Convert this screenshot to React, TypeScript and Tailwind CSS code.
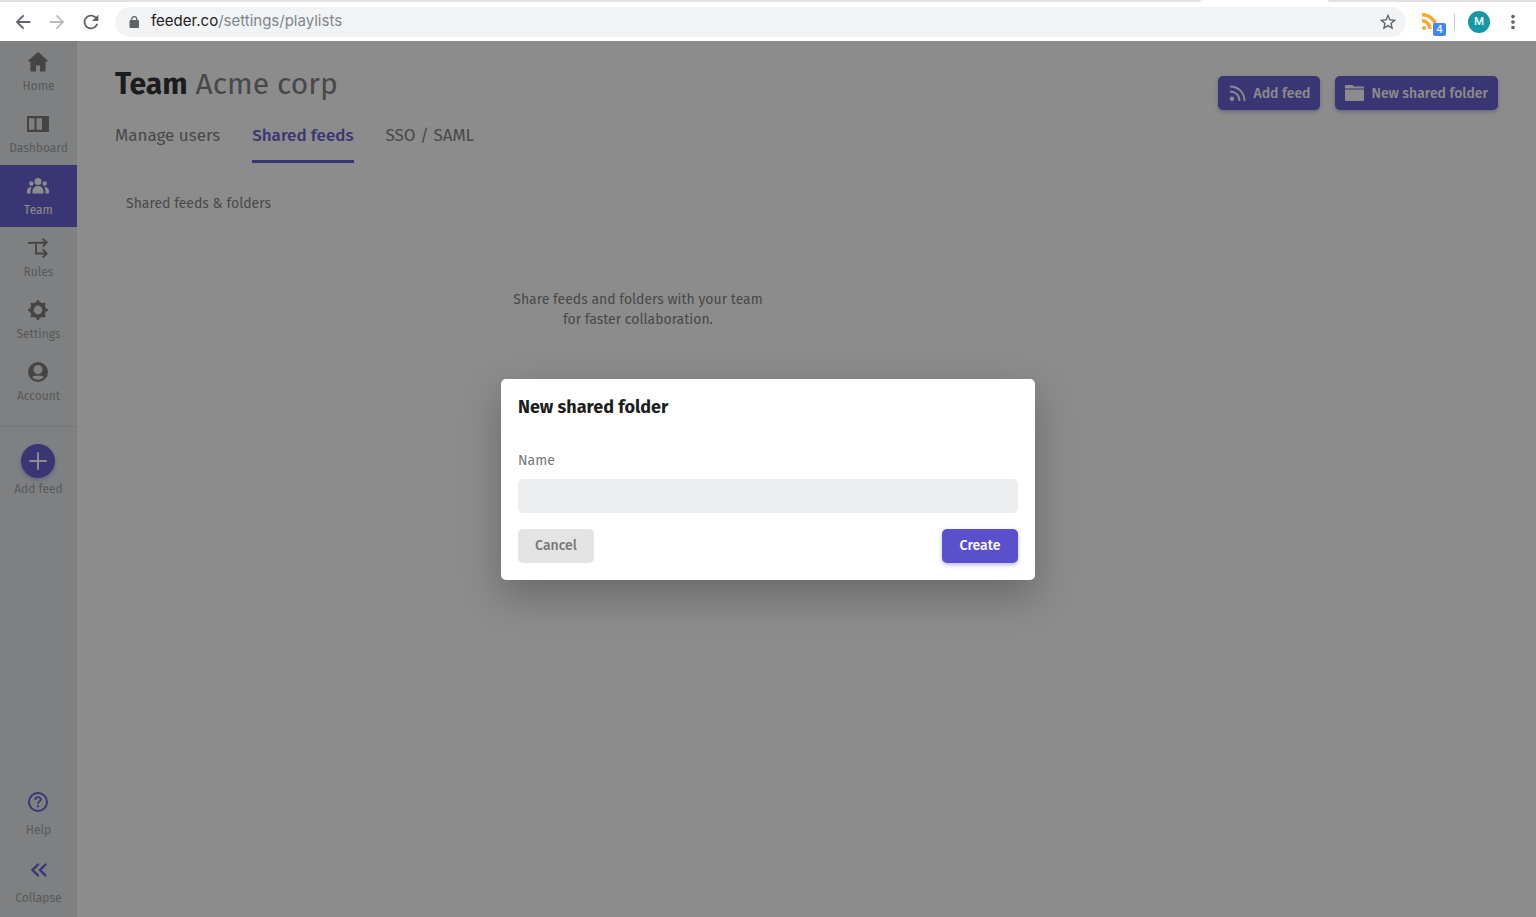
import React from 'react';
import { MdArrowBack, MdArrowForward, MdRefresh, MdStarBorder, MdMoreVert } from 'react-icons/md';

const navItems = [
  { label: 'Home', icon: <HomeIcon /> },
  { label: 'Dashboard', icon: <DashboardIcon /> },
  { label: 'Team', icon: <TeamIcon />, active: true },
  { label: 'Rules', icon: <RulesIcon /> },
  { label: 'Settings', icon: <SettingsIcon /> },
  { label: 'Account', icon: <AccountIcon /> },
];

function HomeIcon() {
  return (
    <svg width="20" height="20" viewBox="0 0 20 20" fill="currentColor">
      <path d="M9.300.600a1 1 0 0 1 1.400 0L19.700 8.600a.5.5 0 0 1-.3.900H17.600v9.300a.7.7 0 0 1-.7.700H12v-6H8v6H3.100a.7.7 0 0 1-.7-.7V9.500H.6a.5.5 0 0 1-.3-.9z" />
    </svg>
  );
}

function DashboardIcon() {
  return (
    <svg width="22" height="16" viewBox="0 0 22 16" fill="currentColor">
      <path fillRule="evenodd" d="M1 0h20a1 1 0 0 1 1 1v14a1 1 0 0 1-1 1H1a1 1 0 0 1-1-1V1a1 1 0 0 1 1-1zm1 2.200v11.600h5.500V2.200zm7.500 0v11.600H15V2.200z" />
    </svg>
  );
}

function TeamIcon() {
  return (
    <svg width="22" height="16" viewBox="0 0 22 16" fill="currentColor">
      <circle cx="11" cy="3.500" r="3.500" />
      <circle cx="4.300" cy="5.500" r="2.200" />
      <circle cx="17.700" cy="5.500" r="2.200" />
      <path d="M5.500 15.500v-2C5.500 10 8 8 11 8s5.500 2 5.500 5.500v2zM0 15.500v-2.500c0-2.500 2-4 4.800-4-1 1.300-1.300 3-1.300 6.500zM22 15.500v-2.500c0-2.500-2-4-4.800-4 1 1.300 1.300 3 1.300 6.500z" />
    </svg>
  );
}

function RulesIcon() {
  return (
    <svg width="20" height="20" viewBox="0 0 20 20" fill="none" stroke="currentColor" strokeWidth="1.800">
      <path d="M0 5l18.500-.5M14.500.800l4.300 3.700-4 4M8 5v10.500h10.500M14.700 11.500l4.100 4-4.100 4" />
    </svg>
  );
}

function SettingsIcon() {
  return (
    <svg width="20" height="20" viewBox="0 0 20 20" fill="none" stroke="currentColor">
      <circle cx="10" cy="10" r="6.200" strokeWidth="3.600" />
      <path
        d="M10 1.500v1M10 17.500v1M1.500 10h1M17.500 10h1M4 4l.7.700M15.300 15.300l.7.700M4 16l.7-.7M15.300 4.700l.7-.7"
        strokeWidth="3"
        strokeLinecap="round"
      />
    </svg>
  );
}

function AccountIcon() {
  return (
    <svg width="20" height="20" viewBox="0 0 20 20" fill="currentColor">
      <path
        fillRule="evenodd"
        d="M10 0a10 10 0 1 1 0 20 10 10 0 0 1 0-20zm0 3a4.500 4.500 0 1 0 0 9 4.500 4.500 0 0 0 0-9zm0 10.500c-2.800 0-5 .7-5.800 1.800 1.400 1.600 3.400 2.500 5.800 2.500s4.400-.9 5.800-2.500c-.8-1.100-3-1.800-5.800-1.800z"
      />
    </svg>
  );
}

function LockIcon() {
  return (
    <svg width="14" height="14" viewBox="0 0 14 14" fill="currentColor">
      <rect x="2.500" y="5" width="9.500" height="8" rx="1" />
      <path d="M4.800 6V4a2.400 2.400 0 0 1 4.900 0v2" fill="none" stroke="currentColor" strokeWidth="1.300" />
    </svg>
  );
}

function FeedIcon() {
  return (
    <svg width="19" height="18" viewBox="0 0 19 18" fill="none" stroke="currentColor" strokeWidth="1.900">
      <path d="M2 2.500c8.500 0 14.500 6 14.500 14.500M2 7.500c5.500 0 9.500 4 9.500 9.500" />
      <circle cx="4" cy="14.800" r="2.200" fill="currentColor" stroke="none" />
    </svg>
  );
}

function FolderIcon() {
  return (
    <svg width="19" height="16" viewBox="0 0 19 16" fill="currentColor">
      <path d="M1 0h6.500l1.500 1.500h9.200a.8.8 0 0 1 .8.800V3.600H0V1a1 1 0 0 1 1-1zM0 4.600h19V15a1 1 0 0 1-1 1H1a1 1 0 0 1-1-1z" />
    </svg>
  );
}

function BrowserBar() {
  return (
    <header className="bg-white font-['Inter',sans-serif] text-[#5f6368]">
      {/* bottom edge of the tab strip, open under the active tab */}
      <div className="flex h-[2px]">
        <span className="flex-1 rounded-br-sm bg-[#dee1e6]" />
        <span className="w-[127px]" />
        <span className="w-[208px] rounded-bl-sm bg-[#dee1e6]" />
      </div>
      <div className="flex h-[39px] items-center pr-3">
        <div className="flex w-[115px] shrink-0 items-center gap-3 pl-3">
          <button type="button" aria-label="Back"><MdArrowBack size={22} /></button>
          <button type="button" aria-label="Forward" className="text-[#babcbe]"><MdArrowForward size={22} /></button>
          <button type="button" aria-label="Reload"><MdRefresh size={22} /></button>
        </div>
        <div className="flex h-[30px] flex-1 items-center rounded-full bg-[#f1f3f4] pr-2 pl-3">
          <LockIcon />
          <span className="flex-1 pl-[10px] text-[15px] text-[#80868b]">
            <span className="text-[#202124]">feeder.co</span>/settings/playlists
          </span>
          <button type="button" aria-label="Bookmark"><MdStarBorder size={20} /></button>
        </div>
        <button type="button" aria-label="Feeder extension" className="relative ml-4 text-[#fda732]">
          <svg width="16" height="17" viewBox="0 0 16 17" fill="none" stroke="currentColor" strokeWidth="3.600">
            <path d="M0 1.800c8 0 14 6 14 14M0 7.800c4.500 0 8 3.700 8 8.300" />
            <circle cx="2" cy="15" r="2" fill="currentColor" stroke="none" />
          </svg>
          <span className="absolute top-[10px] left-[11px] h-[13px] w-[13px] rounded-xs bg-[#4285f4] text-[10px] leading-[13px] font-medium text-white">4</span>
        </button>
        <span className="mr-[13px] ml-4 h-4 w-px bg-[#c9cbce]" />
        <button type="button" className="flex h-[22px] w-[22px] items-center justify-center rounded-full bg-[#1597a5] text-[11px] leading-none font-medium text-white">M</button>
        <button type="button" aria-label="Menu" className="ml-3"><MdMoreVert size={22} /></button>
      </div>
    </header>
  );
}

function Sidebar() {
  return (
    <nav className="flex w-[77px] shrink-0 flex-col bg-[#e3e7e9] text-center text-[12px] text-[#97999b]">
      {navItems.map((item) => (
        <a
          key={item.label}
          href="#"
          className={`flex h-[62px] flex-col items-center ${item.active ? 'bg-[#5b50cc] text-white' : ''}`}
        >
          <span className={`flex h-[42px] items-center pr-px ${item.active ? '' : 'text-[#6f6f6f]'}`}>{item.icon}</span>
          <span className="-mt-[5px] leading-4">{item.label}</span>
        </a>
      ))}

      <div className="mt-[13px] border-t border-[#d3d5d7] pt-[17px]">
        <button type="button" className="flex w-full flex-col items-center">
          <span className="mr-px flex h-[34px] w-[34px] items-center justify-center rounded-full bg-[#5b50cc] text-white shadow-[0_2px_4px_rgba(91,80,204,0.4)]">
            <svg width="18" height="18" viewBox="0 0 18 18" fill="none" stroke="currentColor" strokeWidth="2" strokeLinecap="round">
              <path d="M9 1v16M1 9h16" />
            </svg>
          </span>
          <span className="mt-[3px] leading-4">Add feed</span>
        </button>
      </div>

      <div className="mt-auto flex flex-col">
        <a href="#" className="flex h-[68px] flex-col items-center">
          <svg className="mt-[11px] mr-px text-[#5b50cc]" width="20" height="20" viewBox="0 0 20 20" fill="none" stroke="currentColor" strokeWidth="2">
            <circle cx="10" cy="10" r="9" />
            <path d="M7.200 8c0-4 5.600-3.600 5.600-.6 0 2-2.800 2-2.800 4.400M10 13.200v2" strokeWidth="1.800" />
          </svg>
          <span className="mt-[10px] leading-4">Help</span>
        </a>
        <button type="button" className="flex h-[68px] flex-col items-center">
          <svg className="mt-[11px] text-[#5b50cc]" width="20" height="20" viewBox="0 0 20 20" fill="none" stroke="currentColor" strokeWidth="2.400" strokeLinecap="round">
            <path d="M9 4.500L3.500 10 9 15.500M16.500 4.500L11 10l5.500 5.500" />
          </svg>
          <span className="mt-[10px] leading-4">Collapse</span>
        </button>
      </div>
    </nav>
  );
}

function NewFolderDialog() {
  return (
    <div className="absolute inset-0 flex items-center justify-center bg-[#191919]/50">
      <form
        role="dialog"
        aria-label="New shared folder"
        className="w-full max-w-[534px] rounded-[5px] bg-white px-[17px] pt-4 pb-[17px] shadow-[0_16px_40px_rgba(0,0,0,0.25)]"
      >
        <h2 className="text-[18px] leading-6 font-bold text-[#1e1e1e]">New shared folder</h2>
        <label htmlFor="folder-name" className="mt-8 block text-[14px] leading-5 text-[#777]">
          Name
        </label>
        <input id="folder-name" type="text" className="mt-2 block h-[34px] w-full rounded-[5px] bg-[#edeef0] px-3 text-[14px] outline-none" />
        <div className="mt-4 flex justify-between text-[14px] font-medium">
          <button type="button" className="h-[34px] w-[76px] rounded-[5px] bg-[#e4e4e4] text-[#777]">Cancel</button>
          <button type="submit" className="h-[34px] w-[76px] rounded-[5px] bg-[#5b50cc] text-white shadow-[0_2px_4px_rgba(91,80,204,0.4)]">Create</button>
        </div>
      </form>
    </div>
  );
}

export default function App() {
  return (
    <div className="flex min-h-screen flex-col bg-white font-['Fira_Sans','Noto_Sans',sans-serif]">
      <BrowserBar />
      <div className="relative flex flex-1">
        <Sidebar />
        <main className="flex-1 px-[38px] text-[#777]">
          <div className="flex items-start justify-between">
            <h1 className="pt-[23px] text-[30px] leading-10">
              <b className="text-[#1e1e1e]">Team</b> Acme corp
            </h1>
            <div className="flex gap-[15px] pt-[35px] text-[14px] font-medium text-white">
              <button type="button" className="flex h-[34px] items-center gap-[7px] rounded-[5px] bg-[#5b50cc] px-[10px] shadow-[0_2px_4px_rgba(91,80,204,0.4)]">
                <FeedIcon />
                Add feed
              </button>
              <button type="button" className="flex h-[34px] items-center gap-[7px] rounded-[5px] bg-[#5b50cc] px-[10px] shadow-[0_2px_4px_rgba(91,80,204,0.4)]">
                <FolderIcon />
                New shared folder
              </button>
            </div>
          </div>

          <div className="mt-[14px] flex gap-8 text-[17px] leading-6">
            <a href="#" className="h-[39px]">Manage users</a>
            <a href="#" className="h-[39px] border-b-3 border-[#5b50cc] font-medium text-[#5b50cc]">Shared feeds</a>
            <a href="#" className="h-[39px]">SSO / SAML</a>
          </div>

          <section className="mt-[31px] max-w-[1046px] px-[11px] text-[14px] leading-5">
            <h2>Shared feeds &amp; folders</h2>
            <p className="mt-[76px] text-center">
              Share feeds and folders with your team
              <br />
              for faster collaboration.
            </p>
          </section>
        </main>
        <NewFolderDialog />
      </div>
    </div>
  );
}
